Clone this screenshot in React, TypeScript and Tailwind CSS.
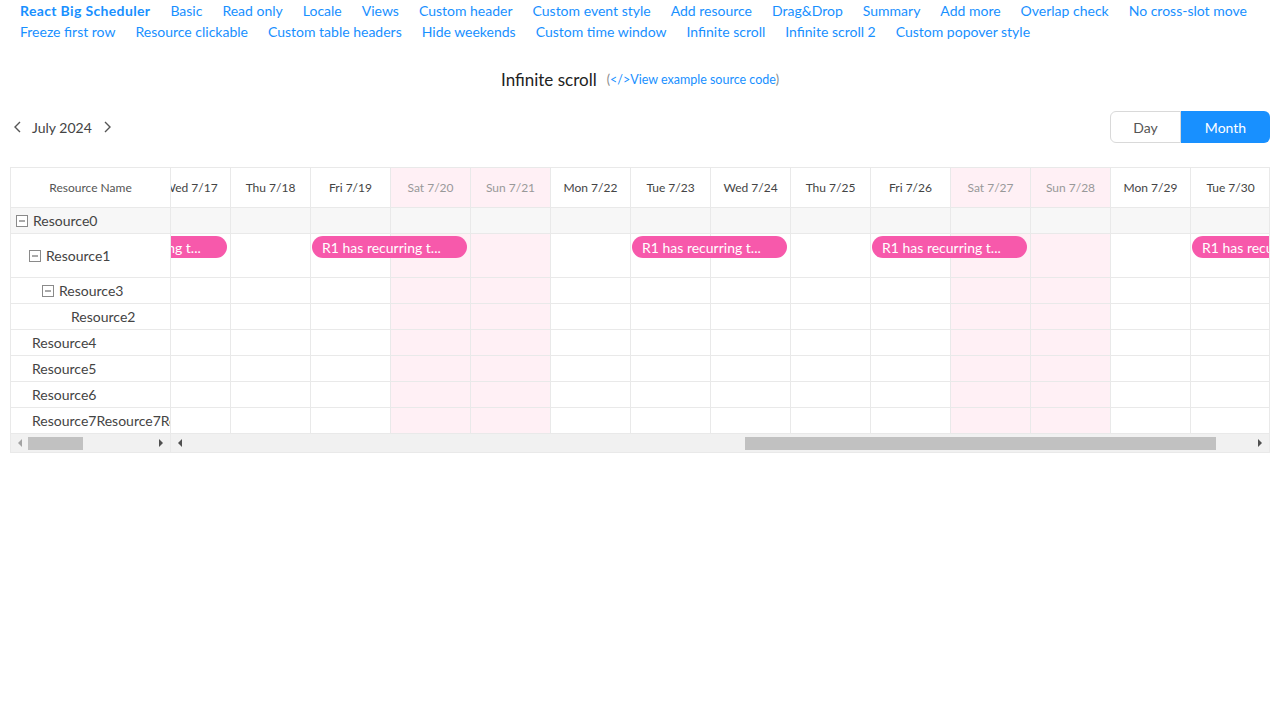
import React from "react";

const navRow1 = ["Basic","Read only","Locale","Views","Custom header","Custom event style","Add resource","Drag&Drop","Summary","Add more","Overlap check","No cross-slot move"];
const navRow2 = ["Freeze first row","Resource clickable","Custom table headers","Hide weekends","Custom time window","Infinite scroll","Infinite scroll 2","Custom popover style"];

const days = [
  { l: "Tue 7/16", w: false },
  { l: "Wed 7/17", w: false },
  { l: "Thu 7/18", w: false },
  { l: "Fri 7/19", w: false },
  { l: "Sat 7/20", w: true },
  { l: "Sun 7/21", w: true },
  { l: "Mon 7/22", w: false },
  { l: "Tue 7/23", w: false },
  { l: "Wed 7/24", w: false },
  { l: "Thu 7/25", w: false },
  { l: "Fri 7/26", w: false },
  { l: "Sat 7/27", w: true },
  { l: "Sun 7/28", w: true },
  { l: "Mon 7/29", w: false },
  { l: "Tue 7/30", w: false },
  { l: "Wed 7/31", w: false },
];

type Res = { name: string; level: number; toggle: boolean; tall?: boolean; group?: boolean };
const resources: Res[] = [
  { name: "Resource0", level: 0, toggle: true, group: true },
  { name: "Resource1", level: 1, toggle: true, tall: true },
  { name: "Resource3", level: 2, toggle: true },
  { name: "Resource2", level: 3, toggle: false },
  { name: "Resource4", level: 0, toggle: false },
  { name: "Resource5", level: 0, toggle: false },
  { name: "Resource6", level: 0, toggle: false },
  { name: "Resource7Resource7Resource7", level: 0, toggle: false },
];

const eventCols = [0, 3, 7, 10, 14];

function MinusBox() {
  return (
    <svg width="12" height="12" viewBox="0 0 12 12" className="shrink-0">
      <rect x="0.5" y="0.5" width="11" height="11" fill="white" stroke="#8a8a8a" />
      <line x1="3" y1="6" x2="9" y2="6" stroke="#555" strokeWidth="1" />
    </svg>
  );
}

function Chevron({ dir }: { dir: "l" | "r" }) {
  return (
    <svg width="14" height="14" viewBox="0 0 14 14">
      {dir === "l" ? (
        <polyline points="9,2 4,7 9,12" fill="none" stroke="#555" strokeWidth="1.4" />
      ) : (
        <polyline points="5,2 10,7 5,12" fill="none" stroke="#555" strokeWidth="1.4" />
      )}
    </svg>
  );
}

function Tri({ dir, light }: { dir: "l" | "r"; light?: boolean }) {
  return (
    <svg width="6" height="8" viewBox="0 0 6 8">
      {dir === "l" ? (
        <polygon points="5,0 1,4 5,8" fill={light ? "#a3a3a3" : "#505050"} />
      ) : (
        <polygon points="1,0 5,4 1,8" fill={light ? "#a3a3a3" : "#505050"} />
      )}
    </svg>
  );
}

export default function App() {
  return (
    <div className="min-h-[720px] bg-white font-['Lato','Liberation_Sans',sans-serif] text-[#333]">
      {/* nav */}
      <div className="px-5 text-[14px] leading-[21px] text-[#1890ff]">
        <div className="flex gap-x-5 whitespace-nowrap">
          <span className="font-bold tracking-[0.35px]">React Big Scheduler</span>
          {navRow1.map((n) => (
            <span key={n}>{n}</span>
          ))}
        </div>
        <div className="flex gap-x-5 whitespace-nowrap">
          {navRow2.map((n) => (
            <span key={n}>{n}</span>
          ))}
        </div>
      </div>

      {/* title */}
      <div className="mt-[26px] flex h-[24px] items-center justify-center">
        <span className="text-[17px] text-[#222]">Infinite scroll</span>
        <span className="ml-[10px] text-[12.5px] text-[#888]">
          (<span className="text-[#1890ff]">&lt;/&gt;View example source code</span>)
        </span>
      </div>

      {/* toolbar */}
      <div className="mt-[19px] flex h-8 items-center justify-between px-2.5">
        <div className="flex items-center">
          <span className="ml-[1px] flex"><Chevron dir="l" /></span>
          <span className="ml-[7px] text-[14px] text-[#444]">July 2024</span>
          <span className="ml-[8px] flex"><Chevron dir="r" /></span>
        </div>
        <div className="flex h-8 text-[14px]">
          <div className="flex w-[71px] items-center justify-center rounded-l-[6px] border border-[#d9d9d9] bg-white text-[#555]">Day</div>
          <div className="flex w-[89px] items-center justify-center rounded-r-[6px] bg-[#1890ff] text-white">Month</div>
        </div>
      </div>

      {/* scheduler */}
      <div className="mx-2.5 mt-6 flex border border-[#e9e9e9] text-[14px]">
        {/* left pane */}
        <div className="w-[160px] shrink-0 overflow-hidden border-r border-[#e9e9e9]">
          <div className="flex h-[40px] items-center justify-center border-b border-[#e9e9e9] text-[12px] text-[#555]">Resource Name</div>
          {resources.map((r) => (
            <div
              key={r.name}
              className={`flex items-center whitespace-nowrap border-b border-[#e9e9e9] pl-[5px] text-[#444] ${r.tall ? "h-[44px]" : "h-[26px]"} ${r.group ? "bg-[#f7f7f7]" : "bg-white"}`}
            >
              <span style={{ width: r.level * 13 }} className="shrink-0" />
              {r.toggle ? <MinusBox /> : <span className="w-[12px] shrink-0" />}
              <span className={r.toggle ? "ml-[5px]" : "ml-[4px]"}>{r.name}</span>
            </div>
          ))}
          <div className="flex h-[18px] items-center bg-[#f1f1f1] px-[6px]">
            <Tri dir="l" light />
            <div className="ml-[5px] h-[13px] w-[55px] bg-[#c1c1c1]" />
            <div className="flex-1" />
            <Tri dir="r" />
          </div>
        </div>

        {/* right pane */}
        <div className="min-w-0 flex-1 overflow-hidden">
          <div className="ml-[-100px] w-max">
            <div className="flex h-[40px]">
              {days.map((d) => (
                <div
                  key={d.l}
                  className={`flex w-[80px] items-center justify-center border-b border-r border-[#e9e9e9] text-[12px] ${d.w ? "bg-[#fff0f5] text-[#999]" : "bg-white text-[#444]"}`}
                >
                  {d.l}
                </div>
              ))}
            </div>
            {resources.map((r) => (
              <div key={r.name} className={`relative flex ${r.tall ? "h-[44px]" : "h-[26px]"}`}>
                {days.map((d) => (
                  <div
                    key={d.l}
                    className={`w-[80px] border-b border-r border-[#e9e9e9] ${r.group ? "bg-[#f7f7f7]" : d.w ? "bg-[#fff0f5]" : "bg-white"}`}
                  />
                ))}
                {r.tall &&
                  eventCols.map((c) => (
                    <div
                      key={c}
                      style={{ left: c * 80 + 1 }}
                      className="absolute top-[2px] flex h-[22px] w-[155px] items-center rounded-full bg-[#f759ab] pl-[10px] text-[14px] whitespace-nowrap text-white"
                    >
                      R1 has recurring t...
                    </div>
                  ))}
              </div>
            ))}
          </div>
          <div className="flex h-[18px] items-center bg-[#f1f1f1] pl-[6px] pr-[6px]">
            <Tri dir="l" />
            <div className="ml-[562px] h-[13px] w-[471px] bg-[#c1c1c1]" />
            <div className="flex-1" />
            <Tri dir="r" />
          </div>
        </div>
      </div>
    </div>
  );
}
